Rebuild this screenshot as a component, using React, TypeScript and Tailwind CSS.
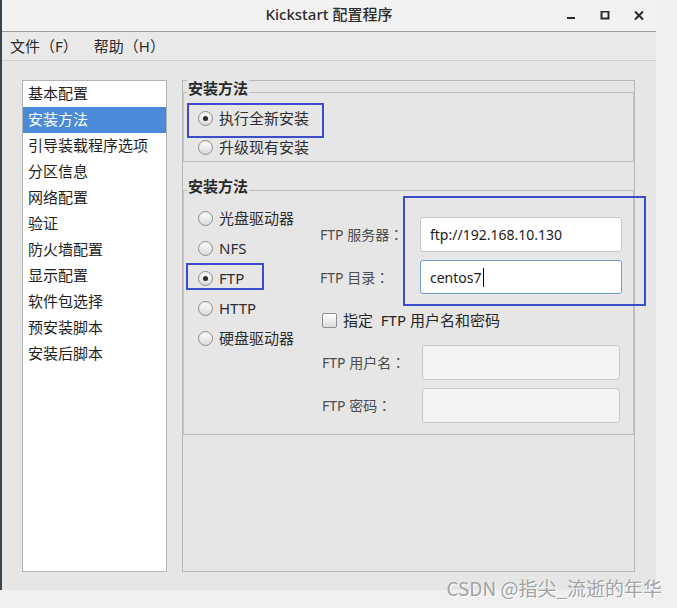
import React from "react";

const Radio = ({ checked }: { checked?: boolean }) => (
  <span className="w-[15px] h-[15px] shrink-0 rounded-full border border-[#8f8f8f] bg-linear-to-b from-white to-[#d9d9d9] flex items-center justify-center shadow-[inset_0_1px_1px_rgba(0,0,0,0.08)]">
    {checked && <span className="w-[5px] h-[5px] rounded-full bg-[#2a2a2a]" />}
  </span>
);

const RadioRow = ({ label, checked, h }: { label: string; checked?: boolean; h: string }) => (
  <div className={`flex items-center gap-[6px] ${h}`}>
    <Radio checked={checked} />
    <span className="text-[15px] text-[#2e2e2e] leading-none">{label}</span>
  </div>
);

const Label = ({ text }: { text: string }) => (
  <span className="text-[14px] text-[#4d4d4d]">
    {text}
    <span className="font-['Noto_Sans_CJK_TC',sans-serif]">：</span>
  </span>
);

const items = [
  "基本配置",
  "安装方法",
  "引导装载程序选项",
  "分区信息",
  "网络配置",
  "验证",
  "防火墙配置",
  "显示配置",
  "软件包选择",
  "预安装脚本",
  "安装后脚本",
];

export default function App() {
  return (
    <div className="relative w-[677px] h-[608px] bg-[#efefef] font-['Noto_Sans','Noto_Sans_CJK_SC',sans-serif] overflow-hidden">
      <div className="w-[656px] h-[590px] flex flex-col border-l-2 border-[#38444e] bg-[#e6e6e6]">
        {/* Title bar */}
        <div className="h-[32px] shrink-0 grid grid-cols-[1fr_auto_1fr] items-center bg-[#f2f2f2] border-b border-[#9a9a9a]">
          <div />
          <div className="text-[15px] font-medium text-[#2c2c2c] leading-none pb-[2px]">Kickstart 配置程序</div>
          <div className="flex justify-end h-full">
            <div className="w-[34px] flex items-center justify-center">
              <svg width="10" height="10" viewBox="0 0 10 10">
                <rect x="1" y="6" width="8" height="2" fill="#2a2a2a" />
              </svg>
            </div>
            <div className="w-[34px] flex items-center justify-center">
              <svg width="10" height="10" viewBox="0 0 10 10">
                <rect x="1.5" y="0.5" width="7" height="7" fill="none" stroke="#2a2a2a" strokeWidth="2" />
              </svg>
            </div>
            <div className="w-[34px] flex items-center justify-center">
              <svg width="10" height="10" viewBox="0 0 10 10">
                <path d="M1 0.5 L9 8.5 M9 0.5 L1 8.5" stroke="#2a2a2a" strokeWidth="2" />
              </svg>
            </div>
          </div>
        </div>
        {/* Menu bar */}
        <div className="h-[29px] shrink-0 flex items-center gap-[16px] pl-[8px] bg-[#e9e9e9] border-b border-[#cdcdcd] text-[15px] text-[#2a2a2a]">
          <span>文件（F）</span>
          <span>帮助（H）</span>
        </div>
        {/* Body */}
        <div className="flex-1 flex gap-[15px] pl-[20px] pt-[19px] pb-[18px]">
          {/* List */}
          <div className="w-[145px] h-[492px] bg-white border border-[#b3b3b3]">
            {items.map((it, i) => (
              <div
                key={it}
                className={`h-[26px] flex items-center pl-[5px] pb-[2px] text-[15px] leading-none ${
                  i === 1 ? "bg-[#4a8ad8] text-white" : "text-[#1e1e1e]"
                }`}
              >
                {it}
              </div>
            ))}
          </div>
          {/* Panel */}
          <div className="w-[453px] h-[492px] border border-[#b8b8b8] flex flex-col">
            {/* Frame 1 */}
            <div className="relative mt-[11px] h-[70px] border border-[#bcbcbc] border-x-[#c4c4c4] pl-[14px] pt-[13px] flex flex-col gap-[4px]">
              <span className="absolute left-[3px] -top-[13px] px-px bg-[#e6e6e6] text-[15px] font-bold leading-[16px] text-[#2a2a2a]">
                安装方法
              </span>
              <div className="relative">
                <span className="absolute -left-[11px] -top-[3px] w-[137px] h-[35px] border-2 border-[#3c4ccb]" />
                <RadioRow label="执行全新安装" checked h="h-[25px]" />
              </div>
              <RadioRow label="升级现有安装" h="h-[25px]" />
            </div>
            {/* Frame 2 */}
            <div className="relative mt-[28px] h-[245px] border border-[#bcbcbc] border-x-[#c4c4c4] flex">
              <span className="absolute left-[3px] -top-[13px] px-px bg-[#e6e6e6] text-[15px] font-bold leading-[16px] text-[#2a2a2a]">
                安装方法
              </span>
              <div className="w-[136px] shrink-0 pl-[14px] pt-[12px] flex flex-col">
                <RadioRow label="光盘驱动器" h="h-[30px]" />
                <RadioRow label="NFS" h="h-[30px]" />
                <div className="relative">
                  <span className="absolute -left-[12px] top-0 w-[78px] h-[27px] border-2 border-[#3c4ccb]" />
                  <RadioRow label="FTP" checked h="h-[30px]" />
                </div>
                <RadioRow label="HTTP" h="h-[30px]" />
                <RadioRow label="硬盘驱动器" h="h-[30px]" />
              </div>
              <div className="pt-[26px] flex flex-col">
                <div className="relative grid grid-cols-[100px_202px] gap-y-[8px] items-center">
                  <span className="absolute left-[83px] -top-[21px] w-[243px] h-[110px] border-2 border-[#3c4ccb]" />
                  <Label text="FTP 服务器" />
                  <div className="h-[35px] rounded-[3px] border border-[#c6c6c6] bg-white flex items-center pl-[9px] text-[14px] text-[#1a1a1a]">
                    ftp://192.168.10.130
                  </div>
                  <Label text="FTP 目录" />
                  <div className="h-[34px] rounded-[3px] border border-[#6f9dcb] bg-white flex items-center pl-[9px] text-[14px] text-[#1a1a1a]">
                    centos7
                    <span className="w-px h-[19px] bg-black ml-px" />
                  </div>
                </div>
                <div className="mt-[19px] ml-[2px] h-[15px] flex items-center gap-[6px]">
                  <span className="w-[15px] h-[15px] rounded-[2px] border border-[#8f8f8f] bg-linear-to-b from-white to-[#dcdcdc]" />
                  <span className="text-[15px] text-[#262626] leading-none whitespace-pre">指定  FTP 用户名和密码</span>
                </div>
                <div className="mt-[17px] ml-[2px] grid grid-cols-[100px_198px] gap-y-[8px] items-center">
                  <Label text="FTP 用户名" />
                  <div className="h-[35px] rounded-[3px] border border-[#c8c8c8] bg-[#f3f3f3]" />
                  <Label text="FTP 密码" />
                  <div className="h-[35px] rounded-[3px] border border-[#c8c8c8] bg-[#f3f3f3]" />
                </div>
              </div>
            </div>
          </div>
        </div>
      </div>
      <span className="absolute right-[15px] top-[576px] text-[19px] leading-[24px] text-[#a3a3a3] [text-shadow:1px_1px_0_#ffffff] font-['Liberation_Sans_Narrow','Noto_Sans_CJK_SC',sans-serif]">
        CSDN @指尖_流逝的年华
      </span>
    </div>
  );
}
